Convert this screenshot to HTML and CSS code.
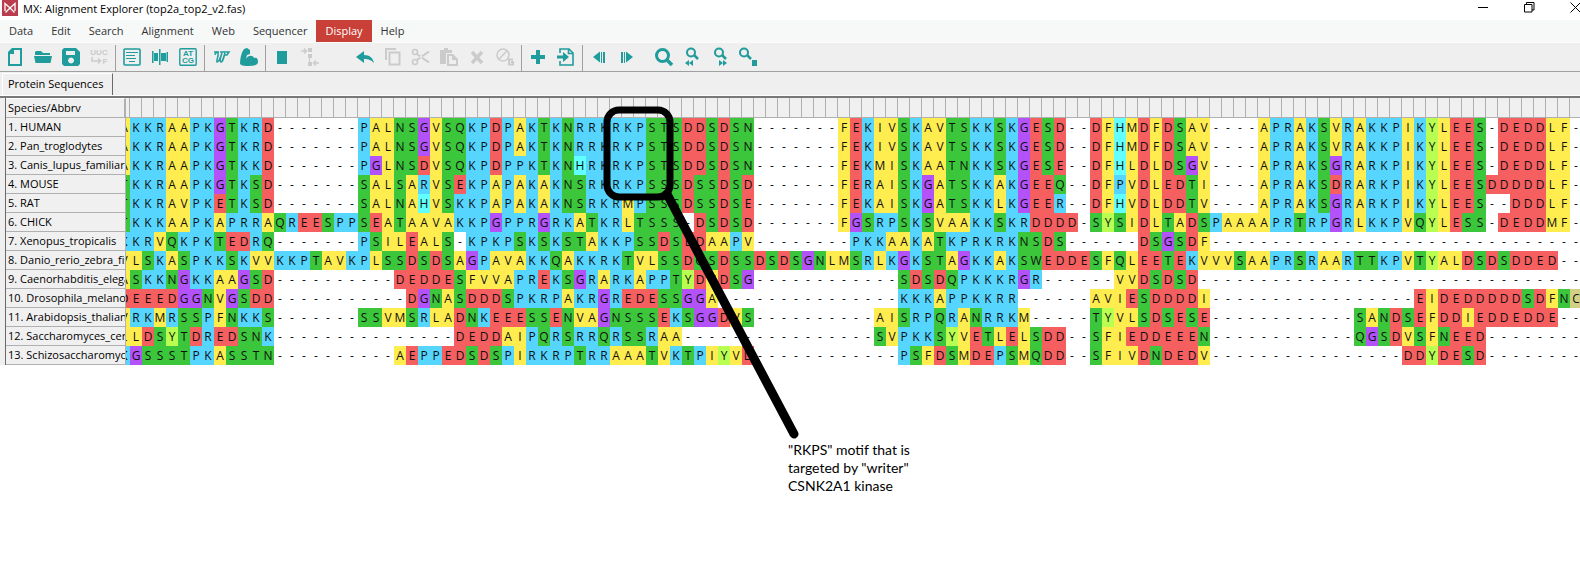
FILE: index.html
```html
<!DOCTYPE html>
<html lang="en">
<head>
<meta charset="utf-8">
<title>MX: Alignment Explorer (top2a_top2_v2.fas)</title>
<link rel="stylesheet" href="styles.css">
</head>
<body>
<header class="titlebar">
  <svg class="app-icon" width="16" height="16" viewBox="0 0 16 16" aria-hidden="true"><rect width="16" height="16" fill="#b93d4c"/><path d="M3 11V3.500L8 8l5-4.500V11M3.500 12.500L8 8l4.500 4.500" fill="none" stroke="#fff" stroke-width="1.300"/></svg>
  <h1 class="title">MX: Alignment Explorer (top2a_top2_v2.fas)</h1>
  <div class="window-controls">
    <button class="win-btn" aria-label="Minimize"><svg width="11" height="11" viewBox="0 0 11 11"><path d="M0 5.500h10" stroke="#000"/></svg></button>
    <button class="win-btn" aria-label="Restore"><svg width="11" height="11" viewBox="0 0 11 11"><path d="M.5 2.500h7.500v7.500H.5zM2.500 2.500V.5H10V8H8" fill="none" stroke="#000"/></svg></button>
    <button class="win-btn" aria-label="Close"><svg width="11" height="11" viewBox="0 0 11 11"><path d="M.5.500l10 10M10.500.500l-10 10" stroke="#000"/></svg></button>
  </div>
</header>

<nav class="menubar">
  <button class="menu">Data</button>
  <button class="menu">Edit</button>
  <button class="menu">Search</button>
  <button class="menu">Alignment</button>
  <button class="menu">Web</button>
  <button class="menu">Sequencer</button>
  <button class="menu menu-active">Display</button>
  <button class="menu">Help</button>
</nav>

<div class="toolbar" role="toolbar" aria-label="Alignment tools">
  <button class="tool" aria-label="New"><svg viewBox="0 0 20 20"><path d="M8 2h8v16H4V6z" fill="none" stroke="currentColor" stroke-width="2"/><path d="M3 7V5l4-4h2v6z" fill="currentColor"/></svg></button>
  <button class="tool" aria-label="Open"><svg viewBox="0 0 20 20"><path d="M2 8V5l1-1h5l2 2h7v2zM1 9h18l-1.500 7h-15z" fill="currentColor"/></svg></button>
  <button class="tool" aria-label="Save"><svg viewBox="0 0 20 20"><path d="M3 1h12l4 4v12l-2 2H3l-2-2V3zM5 4v4h9V4zM10 10.500a3 3 0 1 0 .1 0z" fill="currentColor" fill-rule="evenodd"/></svg></button>
  <button class="tool" aria-label="Translate" disabled><svg viewBox="0 0 20 20"><text class="glyph" x="10" y="8" text-anchor="middle">UUC</text><path d="M3 10v4h8M9 11.500l2.500 2.500L9 16.500" fill="none" stroke="currentColor" stroke-width="1.500"/><text class="glyph" x="16" y="17" text-anchor="middle">F</text></svg></button>
  <span class="sep"></span>
  <button class="tool" aria-label="Edit sequence"><svg viewBox="0 0 20 20"><rect x="2" y="2" width="16" height="16" rx="1" fill="none" stroke="currentColor" stroke-width="1.600"/><path d="M4 5.500h12M4 8.500h9M4 11.500h10M7 14.500h6" stroke="currentColor" stroke-width="1.200"/></svg></button>
  <button class="tool" aria-label="Align"><svg viewBox="0 0 20 20"><path d="M2 4h1.500v12H2zM4 6h4v8H4zM9 2h1.500v16H9zM11 6h5v8h-5zM16.500 5H18v10h-1.500z" fill="currentColor"/></svg></button>
  <button class="tool" aria-label="Nucleotide view"><svg viewBox="0 0 20 20"><rect x="1.800" y="1.800" width="16.400" height="16.400" rx="1" fill="none" stroke="currentColor" stroke-width="1.400"/><text class="glyph" x="10" y="9" text-anchor="middle">AT</text><text class="glyph" x="10" y="16" text-anchor="middle">CG</text></svg></button>
  <span class="sep"></span>
  <button class="tool" aria-label="Align by ClustalW"><svg viewBox="0 0 20 20"><path d="M3 5h5M4 8c0-2 2-3 3-2 1 2-2 8-1 9 3-1 4-7 5-9-1 3-3 9-1 9 3-1 3-7 4-9M9 5h9l-2 3h-3M14 6l-3 9" fill="none" stroke="currentColor" stroke-width="1.500"/></svg></button>
  <button class="tool" aria-label="Align by Muscle"><svg viewBox="0 0 20 20"><path d="M5 2l3-1 3 2v4l-3 1-1 4c2-4 7-4 8-1 3-1 4 1 4 4 0 3-4 4-9 4-4 0-7 0-9-2C1 12 2 6 5 2z" fill="currentColor"/></svg></button>
  <span class="sep"></span>
  <button class="tool" aria-label="Mark site"><svg viewBox="0 0 20 20"><path d="M5 4h10v13H5z" fill="currentColor"/></svg></button>
  <button class="tool" aria-label="Align marked sites" disabled><svg viewBox="0 0 20 20"><path d="M8 1h4v4H8zM8 7h4v4H8zM8 15h4v4H8zM9 11h1v4H9z" fill="currentColor"/><path d="M1 4h5M4 1.500L6.500 4 4 6.500M19 16h-5M16 13.500L13.500 16l2.500 2.500" fill="none" stroke="currentColor" stroke-width="1.400"/></svg></button>
  <span class="tool-gap"></span>
  <button class="tool" aria-label="Undo"><svg viewBox="0 0 20 20"><path d="M1 10l8-6v4c6 0 9 3 10 8-3-3-5-4-10-4v4z" fill="currentColor"/></svg></button>
  <button class="tool" aria-label="Copy" disabled><svg viewBox="0 0 20 20"><path d="M3 13V2h10M6.500 5.500h10v12h-10z" fill="none" stroke="currentColor" stroke-width="2"/></svg></button>
  <button class="tool" aria-label="Cut" disabled><svg viewBox="0 0 20 20"><circle cx="4" cy="5" r="2.500" fill="none" stroke="currentColor" stroke-width="1.600"/><circle cx="4" cy="15" r="2.500" fill="none" stroke="currentColor" stroke-width="1.600"/><path d="M6 6l13 9-2 1L5.500 8zM6 14l13-9-2-1-11.500 8z" fill="currentColor"/></svg></button>
  <button class="tool" aria-label="Paste" disabled><svg viewBox="0 0 20 20"><path d="M1 3h4V1h4v2h4v3H7v11H1zM8 7h6l5 5v7H8zm2 2v8h7v-4h-4V9z" fill="currentColor" fill-rule="evenodd"/></svg></button>
  <button class="tool" aria-label="Delete" disabled><svg viewBox="0 0 20 20"><path d="M5 5l10 11M15 5L5 16" stroke="currentColor" stroke-width="3.500"/></svg></button>
  <button class="tool" aria-label="Delete gap sites" disabled><svg viewBox="0 0 20 20"><circle cx="8" cy="8" r="6" fill="none" stroke="currentColor" stroke-width="1.500"/><path d="M4 12l8-8" stroke="currentColor" stroke-width="1.500"/><path d="M18 12.500h-4v5h4V15h-2" fill="none" stroke="currentColor" stroke-width="2"/></svg></button>
  <span class="sep"></span>
  <button class="tool" aria-label="Insert sequence"><svg viewBox="0 0 20 20"><path d="M8 3h4v5h5v4h-5v5H8v-5H3V8h5z" fill="currentColor"/></svg></button>
  <button class="tool" aria-label="Insert from file"><svg viewBox="0 0 20 20"><path d="M4 6V2h9l4 4v12H4v-4M12.500 2v4.500H17" fill="none" stroke="currentColor" stroke-width="1.600"/><path d="M1 8.500h6V5l6 5-6 5v-3.500H1z" fill="currentColor"/></svg></button>
  <span class="sep"></span>
  <button class="tool" aria-label="Previous"><svg viewBox="0 0 20 20"><path d="M11 4.500v11L4 10zM12 5h1v11h-1zM14 5h2v11h-2z" fill="currentColor"/></svg></button>
  <button class="tool" aria-label="Next"><svg viewBox="0 0 20 20"><path d="M9 4.500v11l7-5.500zM7 5h1v11H7zM4 5h2v11H4z" fill="currentColor"/></svg></button>
  <span class="tool-space"></span>
  <button class="tool" aria-label="Find"><svg viewBox="0 0 20 20"><circle cx="8.500" cy="8.500" r="6" fill="none" stroke="currentColor" stroke-width="3"/><path d="M13 13l5 5" stroke="currentColor" stroke-width="3.500"/></svg></button>
  <button class="tool" aria-label="Find previous"><svg viewBox="0 0 20 20"><circle cx="9" cy="5.500" r="4" fill="none" stroke="currentColor" stroke-width="2"/><path d="M12 8l4 4" stroke="currentColor" stroke-width="2.500"/><path d="M7 13v6l-4-3zM11 13v6l-4-3z" fill="currentColor"/></svg></button>
  <button class="tool" aria-label="Find next"><svg viewBox="0 0 20 20"><circle cx="9" cy="5.500" r="4" fill="none" stroke="currentColor" stroke-width="2"/><path d="M12 8l4 4" stroke="currentColor" stroke-width="2.500"/><path d="M9 13v6l4-3zM13 13v6l4-3z" fill="currentColor"/></svg></button>
  <button class="tool" aria-label="Find marked site"><svg viewBox="0 0 20 20"><circle cx="6" cy="5.500" r="4" fill="none" stroke="currentColor" stroke-width="2"/><path d="M9 8l4 4" stroke="currentColor" stroke-width="2.500"/><path d="M14 13h5v6h-5z" fill="currentColor"/></svg></button>
</div>

<div class="tabs" role="tablist"><button class="tab" role="tab" aria-selected="true">Protein Sequences</button></div>

<main class="workspace">
  <div class="alignment">
    <table class="sequences">
      <colgroup><col class="col-name"><col class="col-edge"><col span="121"></colgroup>
      <thead><tr><th class="corner" scope="col">Species/Abbrv</th><td class="ruler" colspan="122"></td></tr></thead>
      <tbody id="rows"></tbody>
    </table>
  </div>
  <p class="note">"RKPS" motif that is<br>targeted by "writer"<br>CSNK2A1 kinase</p>
  <svg class="marker" width="220" height="350" viewBox="0 0 220 350" aria-hidden="true">
    <rect x="17" y="14" width="63" height="87" rx="12" fill="none" stroke="#000" stroke-width="7"/>
    <path d="M77 98L204 338" stroke="#000" stroke-width="9" stroke-linecap="round"/>
  </svg>
</main>
<script src="alignment.js"></script>
</body>
</html>
```

FILE: styles.css
```css
* {
  box-sizing: border-box;
}

body {
  display: flex;
  flex-direction: column;
  min-height: 100vh;
  margin: 0;
  background: #fff;
  color: #000;
  font: 11px/18px "Open Sans", "Noto Sans", sans-serif;
}

button {
  margin: 0;
  padding: 0;
  border: 0;
  background: none;
  color: inherit;
  font: inherit;
}

.titlebar {
  display: flex;
  height: 20px;
  padding-left: 2px;
  gap: 5px;
  overflow: hidden;
}

.title {
  margin: 0;
  flex: 1;
  font-size: 11px;
  font-weight: 400;
  line-height: 18px;
}

.window-controls {
  display: flex;
  margin-right: -18px;
}

.win-btn {
  display: flex;
  width: 46px;
  height: 14px;
  align-items: center;
  justify-content: center;
}

.menubar {
  display: flex;
  height: 23px;
  background: #f6f9f8;
  border-bottom: 1px solid #fcfcfc;
  color: #333;
}

.menu {
  padding: 0 9px;
}

.menu-active {
  background: #c84037;
  color: #fff;
}

.toolbar {
  display: flex;
  height: 29px;
  padding-left: 1px;
  background: #efefef;
  border-bottom: 1px solid #a0a0a0;
}

.tool {
  display: flex;
  width: 28px;
  align-items: center;
  justify-content: center;
  color: #209c9c;
}

.tool:disabled {
  color: #cbcbcb;
}

.tool svg {
  width: 20px;
  height: 20px;
}

.glyph {
  font: 700 8px "Liberation Sans", sans-serif;
  fill: currentColor;
}

.sep {
  width: 1px;
  margin: 2px 2px 0;
  background: #a0a0a0;
}

.tool-gap {
  width: 27px;
}

.tool-space {
  width: 9px;
}

.tabs {
  display: flex;
  height: 24px;
  padding: 1px 0 0 2px;
  background: #efefef;
  border-bottom: 1px solid #fff;
}

.tab {
  height: 22px;
  padding: 0 8px 2px 5px;
  border: 1px solid #fff;
  border-right: 1px solid #696969;
  border-bottom: 0;
}

.workspace {
  position: relative;
  flex: 1;
}

.alignment {
  padding-left: 5px;
  background: linear-gradient(90deg, #efefef 5px, #fff 5px);
  border-top: 2px solid #787878;
  overflow: hidden;
}

.sequences {
  width: 1577px;
  table-layout: fixed;
  border-collapse: separate;
  border-spacing: 0;
  border-left: 1px solid #696969;
}

.sequences th,
.sequences td {
  height: 19px;
  padding: 0;
  line-height: 18px;
  font-weight: 400;
  overflow: hidden;
  white-space: nowrap;
}

.col-name {
  width: 120px;
}

.col-edge {
  width: 4px;
}

.sequences th {
  padding-left: 2px;
  background: #f0f0f0;
  border-right: 1px solid #b0b0b0;
  border-bottom: 1px solid #b0b0b0;
  text-align: left;
}

.sequences .corner {
  border-right-width: 2px;
  border-top: 1px solid #fff;
}

.sequences .ruler {
  background: repeating-linear-gradient(90deg, #f0f0f0 0 3px, #b0b0b0 3px 4px, #f0f0f0 4px 12px);
  border-bottom: 1px solid #b0b0b0;
}

.sequences .res {
  font-size: 12px;
  text-align: center;
  color: #101010;
}

.edge-letter {
  display: flex;
  width: 4px;
  justify-content: flex-end;
  font-size: 12px;
}

.edge-letter span {
  flex: none;
  width: 12px;
  text-align: center;
}

.basic { background: #56d6ff; }
.hydrophobic { background: #ffed50; }
.polar { background: #3bc63b; }
.acidic { background: #f55f5f; }
.glycine { background: #b452fa; }
.histidine { background: #62ffff; }
.tyrosine { background: #b8ff52; }
.cysteine { background: #d2d084; }

.marker {
  position: absolute;
  left: 590px;
  top: 0;
}

.note {
  margin: 76px 0 0 788px;
  font: 14px/18px Lato, "Open Sans", sans-serif;
}
```

FILE: alignment.js
```js
// Each entry: species, residue cut by the left edge, visible residues.
const species = [
  ["HUMAN", "A", "KKRAAPKGTKRD-------PALNSGVSQKPDPAKTKNRRKRKPSTSDDSDSN-------FEKIVSKAVTSKKSKGESD--DFHMDFDSAV----APRAKSVRAKKPIKYLEES-DEDDLF-"],
  ["Pan_troglodytes", "A", "KKRAAPKGTKRD-------PALNSGVSQKPDPAKTKNRRKRKPSTSDDSDSN-------FEKIVSKAVTSKKSKGESD--DFHMDFDSAV----APRAKSVRAKKPIKYLEES-DEDDLF-"],
  ["Canis_lupus_familiaris", "A", "KKRAAPKGTKKD-------PGLNSDVSQKPDPPKTKNHRKRKPSTSDDSDSN-------FEKMISKAATNKKSKGESE--DFHLDLDSGV----APRAKSGRARKPIKYLEES-DEDDLF-"],
  ["MOUSE", "T", "KKRAAPKGTKSD-------SALSARVSEKPAPAKAKNSRKRKPSSSDSSDSD-------FERAISKGATSKKAKGEEQ--DFPVDLEDTI----APRAKSDRARKPIKYLEESDDDDDLF-"],
  ["RAT", "T", "KKRAVPKETKSD-------SALNAHVSKKPAPAKAKNSRKRMPSSSDSSDSE-------FEKAISKGATSKKLKGEER--DFHVDLDDTV----APRAKSGRARKPIKYLEES--DDDLF-"],
  ["CHICK", "T", "KKKAAPKAPRRAQREESPPSEATAAVAKKPGPPRGRKATKRLTSSS-DSDSD-------FGSRPSKSVAAKKSKRDDDD-SYSIDLTADSPAAAAPRTRPGRLKKPVQYLESS-DEDDMF-"],
  ["Xenopus_tropicalis", "K", "KRVQKPKTEDRQ-------PSILEALS-KPKPSKSKSTAKKPSSDSEDAAPV--------PKKAAKATKPRKRKNSDS------DSGSDF-------------------------------"],
  ["Danio_rerio_zebra_fish", "V", "LSKASPKKSKVVKKPTAVKPLSSDSDSAGPAVAKKQAKKRKTVLSSDQSDSSDSDSGNLMSRLKGKSTAGKKAKSWEDDESFQLEETEKVVVSAAPRSRAARTTKPVTYALDSDSDDED--"],
  ["Caenorhabditis_elegans", "A", "SKKNGKKAAGSD----------DEDDESFVVAPREKSGRARKAPPTYDVDSG------------SDSDQPKKKRGR------VVDSDSD--------------------------------"],
  ["Drosophila_melanogaster", "D", "EEEDGGNVGSDD-----------DGNASDDDSPKRPAKRGREDESSGGA---------------KKKAPPKKRR------AVIESDDDDI-----------------EIDEDDDDDSDFNC"],
  ["Arabidopsis_thaliana", "V", "RKMRSSPFNKKS-------SSVMSRLADNKEEESSENVAGNSSSEKSGGDVS----------AISRPQRANRRKM-----TYVLSDSESE------------SANDSEFDDIEDDEDDE--"],
  ["Saccharomyces_cerevisiae", "L", "LDSYTDREDSNK---------------DEDDAIPQRSRRQRSSRAA----------------SVPKKSYVETLELSDD--SFIEDDEEEN------------QGSDVSFNEED--------"],
  ["Schizosaccharomyces_pombe", "K", "GSSSTPKASSTN----------AEPPEDSDSPIRKRPTRRAAATVKTPIYVD------------PSFDSMDEPSMQDD--SFIVDNDEDV----------------DDYDESD--------"]
];

const groups = {
  basic: "KRP",
  hydrophobic: "AVLIFM",
  polar: "STNQW",
  acidic: "DE",
  glycine: "G",
  histidine: "H",
  tyrosine: "Y",
  cysteine: "C"
};

function groupOf(residue) {
  return Object.keys(groups).find(name => groups[name].includes(residue)) || "";
}

document.getElementById("rows").innerHTML = species.map(([name, edge, residues], i) => {
  const cells = [...residues].map(r => `<td class="res ${groupOf(r)}">${r}</td>`).join("");
  return `<tr><th scope="row">${i + 1}. ${name}</th>` +
    `<td class="${groupOf(edge)}"><div class="edge-letter"><span>${edge}</span></div></td>${cells}</tr>`;
}).join("");
```
